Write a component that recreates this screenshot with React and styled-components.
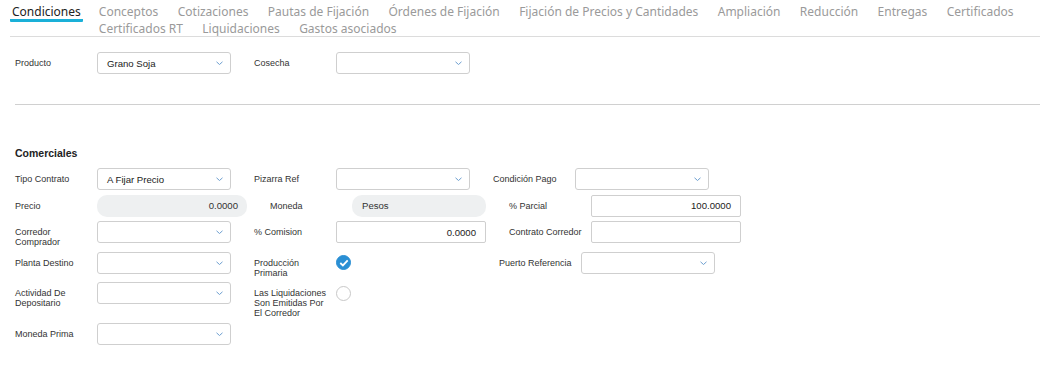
import React from 'react';
import styled, { createGlobalStyle } from "styled-components";

const GlobalStyle = createGlobalStyle`
  body {
    margin: 0;
    background: #fff;
    font-family: "Liberation Sans", Arial, sans-serif;
  }
`

const tabsRest = [
    "Conceptos", "Cotizaciones", "Pautas de Fijación", "Órdenes de Fijación",
    "Fijación de Precios y Cantidades", "Ampliación", "Reducción", "Entregas",
    "Certificados", "Certificados RT", "Liquidaciones", "Gastos asociados"
];

const Chevron = () => (
    <svg width="9" height="6" viewBox="0 0 9 6">
        <path d="M1.5 1.8 L4.5 4.5 L7.5 1.8" fill="none" stroke="#6d9fd0" strokeWidth="1" />
    </svg>
);

const Select = ({ value, width }) => (
    <SelectBox width={width}>
        <span>{value}</span>
        <Chevron />
    </SelectBox>
);

const Field = ({ label, width = 134, children }) => (
    <FieldWrap>
        <Label>{label}</Label>
        <Control width={width}>{children}</Control>
    </FieldWrap>
);

const App = () => {
    return (
        <Page>
            <GlobalStyle />
            <Tabs>
                <ActiveTab>Condiciones</ActiveTab>
                <TabList>
                    {tabsRest.map(t => <Tab key={t}>{t}</Tab>)}
                </TabList>
            </Tabs>

            <Content>
                <Row>
                    <Field label="Producto"><Select value="Grano Soja" /></Field>
                    <Field label="Cosecha"><Select value="" /></Field>
                </Row>

                <Divider />

                <Heading>Comerciales</Heading>

                <Rows>
                    <Row>
                        <Field label="Tipo Contrato"><Select value="A Fijar Precio" /></Field>
                        <Field label="Pizarra Ref"><Select value="" /></Field>
                        <Field label="Condición Pago"><Select value="" /></Field>
                    </Row>
                    <Row>
                        <Field label="Precio" width={150}><ReadOnly align="right">0.0000</ReadOnly></Field>
                        <Field label="Moneda" width={134}><ReadOnly>Pesos</ReadOnly></Field>
                        <Field label="% Parcial" width={150}><Input align="right">100.0000</Input></Field>
                    </Row>
                    <Row>
                        <Field label="Corredor Comprador"><Select value="" /></Field>
                        <Field label="% Comision" width={150}><Input align="right">0.0000</Input></Field>
                        <Field label="Contrato Corredor" width={150}><Input /></Field>
                    </Row>
                    <Row>
                        <Field label="Planta Destino"><Select value="" /></Field>
                        <Field label="Producción Primaria" width={140}><Radio checked /></Field>
                        <Field label="Puerto Referencia"><Select value="" /></Field>
                    </Row>
                    <Row>
                        <Field label="Actividad De Depositario"><Select value="" /></Field>
                        <Field label="Las Liquidaciones Son Emitidas Por El Corredor" width={140}><Radio /></Field>
                    </Row>
                    <Row>
                        <Field label="Moneda Prima"><Select value="" /></Field>
                    </Row>
                </Rows>
            </Content>
        </Page>
    );
};

const Radio = ({ checked }) => (
    <RadioBox checked={checked}>
        {checked && (
            <svg width="10" height="8" viewBox="0 0 10 8">
                <path d="M1.3 4 L3.9 6.4 L8.7 1.4" fill="none" stroke="#fff" strokeWidth="1.8" />
            </svg>
        )}
    </RadioBox>
);

export default App;

const Page = styled.div`
  width: 1040px;
  height: 374px;
  overflow: hidden;
`

const Tabs = styled.div`
  display: flex;
  margin-left: 10px;
  padding-top: 5px;
  height: 31px;
  border-bottom: 1px solid #dcdcdc;
  font-family: "Noto Sans", sans-serif;
  font-size: 12px;
`

const ActiveTab = styled.div`
  align-self: flex-start;
  color: #222;
  height: 14px;
  line-height: 14px;
  padding: 0 2px 0 2px;
  border-bottom: 3px solid #1ab0d8;
  border-radius: 1px;
  margin-right: 16px;
`

const TabList = styled.div`
  display: flex;
  flex-wrap: wrap;
  column-gap: 19.4px;
  row-gap: 3px;
  width: 935px;
`

const Tab = styled.div`
  color: #9a9a9a;
  line-height: 14px;
`

const Content = styled.div`
  padding: 15px 0 0 15px;
`

const Rows = styled.div`
  display: flex;
  flex-direction: column;
  gap: 4.5px;
`

const Row = styled.div`
  display: flex;
  align-items: flex-start;
  gap: 23px;
`

const FieldWrap = styled.div`
  display: flex;
  align-items: flex-start;
`

const Label = styled.div`
  flex: none;
  width: 82px;
  box-sizing: border-box;
  padding: 6px 6px 0 0;
  font-size: 9px;
  line-height: 10px;
  color: #333;
`

const Control = styled.div`
  width: ${p => p.width}px;
  height: 22px;
  display: flex;
  align-items: center;
`

const SelectBox = styled.div`
  box-sizing: border-box;
  width: 100%;
  height: 22px;
  border: 1px solid #cfcfcf;
  border-radius: 3px;
  display: flex;
  align-items: center;
  justify-content: space-between;
  padding: 0 6px 0 9px;
  font-size: 9.6px;
  color: #222;
`

const ReadOnly = styled.div`
  box-sizing: border-box;
  width: 100%;
  height: 22px;
  background: #eef0f1;
  border-radius: 10px;
  display: flex;
  align-items: center;
  justify-content: ${p => p.align === "right" ? "flex-end" : "flex-start"};
  padding: 0 9px 0 10px;
  font-size: 9.6px;
  color: #333;
`

const Input = styled.div`
  box-sizing: border-box;
  width: 100%;
  height: 22px;
  border: 1px solid #cfcfcf;
  border-radius: 2px;
  display: flex;
  align-items: center;
  justify-content: ${p => p.align === "right" ? "flex-end" : "flex-start"};
  padding: 0 9px;
  font-size: 9.6px;
  color: #222;
`

const RadioBox = styled.div`
  box-sizing: border-box;
  width: 15px;
  height: 15px;
  border-radius: 50%;
  border: 1px solid ${p => p.checked ? "#2a8fd4" : "#c8c8c8"};
  background: ${p => p.checked ? "#2a8fd4" : "#fff"};
  display: flex;
  align-items: center;
  justify-content: center;
`

const Divider = styled.div`
  height: 1px;
  background: #d0d0d0;
  margin-top: 30px;
`

const Heading = styled.div`
  margin-top: 42px;
  margin-bottom: 9px;
  font-size: 10.5px;
  font-weight: bold;
  color: #222;
  line-height: 12px;
`
